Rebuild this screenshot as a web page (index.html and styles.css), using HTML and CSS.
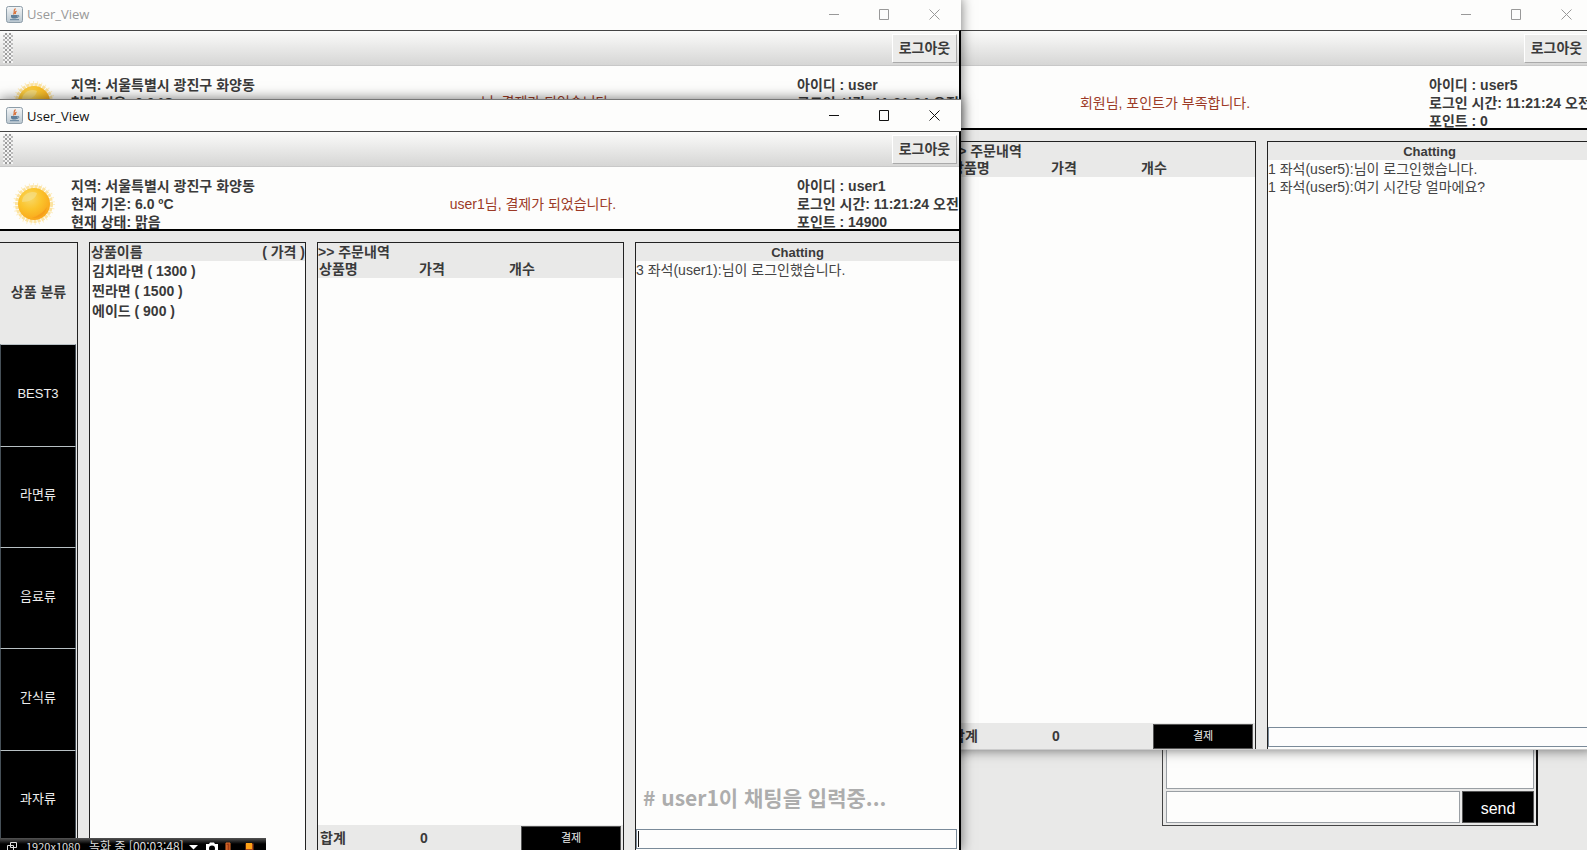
FILE: index.html
```html
<!DOCTYPE html>
<html lang="ko">
<head>
<meta charset="utf-8">
<title>User_View</title>
<link rel="stylesheet" href="styles.css">
</head>
<body>
<svg class="defs" aria-hidden="true">
  <defs>
    <radialGradient id="sunFill" cx="38%" cy="32%" r="70%">
      <stop offset="0" stop-color="#f8d868"/><stop offset=".5" stop-color="#fbc42c"/><stop offset="1" stop-color="#f9a61a"/>
    </radialGradient>
    <linearGradient id="javaFill" x1="0" y1="0" x2="0" y2="1">
      <stop offset="0" stop-color="#f4f6f7"/><stop offset="1" stop-color="#b9c6cf"/>
    </linearGradient>
    <symbol id="java" viewBox="0 0 17 17">
      <rect x=".5" y=".5" width="16" height="16" rx="2" fill="url(#javaFill)" stroke="#8d9da8"/>
      <path d="M9.500 2.500C6.500 5 9.500 5.500 7.500 8.500M10.500 5C9 6 9 7 9.500 8" fill="none" stroke="#d9713a" stroke-width="1.200"/>
      <path d="M5 9h6.500v1.500a2 2 0 0 1-2 2H7a2 2 0 0 1-2-2z" fill="#5f7f9a"/>
      <path d="M11.500 9.500c2-.5 2 1.500-.5 2M4 13.700h9" fill="none" stroke="#5f7f9a"/>
    </symbol>
    <symbol id="sun" viewBox="0 0 44 44">
      <circle cx="22" cy="22" r="19" fill="none" stroke="#fdeec4" stroke-width="4" stroke-dasharray="1 3"/>
      <circle cx="22" cy="22" r="17" fill="none" stroke="#fce3a0" stroke-width="4" stroke-dasharray="3 1"/>
      <circle cx="22" cy="22" r="16" fill="url(#sunFill)"/>
      <path d="M20 36c9 1 14-5 15-11-3 4-4 5-7 7s-5 3-8 4z" fill="#f59a1c" opacity=".8"/>
      <path d="M10 20c0-8 9-12 15-9-1 6-8 9-15 9z" fill="#f5de86" opacity=".7"/>
    </symbol>
    <symbol id="min" viewBox="0 0 11 11"><path d="M0 5.500h10" stroke="currentColor" fill="none"/></symbol>
    <symbol id="max" viewBox="0 0 11 11"><path d="M.5.5h9v10h-9z" stroke="currentColor" fill="none"/></symbol>
    <symbol id="close" viewBox="0 0 11 11"><path d="M.5.5l10 10M10.500.5l-10 10" stroke="currentColor" fill="none"/></symbol>
  </defs>
</svg>
<main class="desktop">

  <section class="window admin" aria-label="채팅">
    <div class="admin-chat">
      <textarea class="admin-log" aria-label="대화 내용"></textarea>
      <form class="admin-form">
        <input class="admin-input" type="text" aria-label="메시지">
        <button class="send" type="button">send</button>
      </form>
    </div>
  </section>

  <section class="window user-window third inactive">
    <div class="titlebar">
      <div class="controls">
        <button type="button" aria-label="최소화"><svg><use href="#min"/></svg></button>
        <button type="button" aria-label="최대화"><svg><use href="#max"/></svg></button>
        <button type="button" aria-label="닫기"><svg><use href="#close"/></svg></button>
      </div>
    </div>
    <div class="client">
      <div class="toolbar"><span class="grip"></span><button class="logout" type="button">로그아웃</button></div>
      <header class="info">
        <span></span>
        <div></div>
        <p class="message">회원님, 포인트가 부족합니다.</p>
        <div class="lines">아이디 : user5<br>로그인 시간: 11:21:24 오전<br>포인트 : 0</div>
      </header>
      <div class="work">
        <div class="panel"></div>
        <div class="panel"></div>
        <div class="panel order">
          <h2 class="caption">&gt;&gt; 주문내역</h2>
          <table class="items"><thead><tr><th>상품명</th><th>가격</th><th>개수</th></tr></thead></table>
          <div class="total"><span>합계</span><output>0</output><button class="pay" type="button">결제</button></div>
        </div>
        <div class="panel chat">
          <h2 class="chat-title">Chatting</h2>
          <div class="log"><p>1 좌석(user5):님이 로그인했습니다.</p><p>1 좌석(user5):여기 시간당 얼마에요?</p></div>
          <input class="chat-input" type="text" aria-label="채팅 입력">
        </div>
      </div>
    </div>
  </section>

  <section class="window user-window first inactive">
    <div class="titlebar">
      <svg class="app-icon"><use href="#java"/></svg><h1 class="title">User_View</h1>
      <div class="controls">
        <button type="button" aria-label="최소화"><svg><use href="#min"/></svg></button>
        <button type="button" aria-label="최대화"><svg><use href="#max"/></svg></button>
        <button type="button" aria-label="닫기"><svg><use href="#close"/></svg></button>
      </div>
    </div>
    <div class="client">
      <div class="toolbar"><span class="grip"></span><button class="logout" type="button">로그아웃</button></div>
      <header class="info">
        <svg class="sun"><use href="#sun"/></svg>
        <div class="lines">지역: 서울특별시 광진구 화양동<br>현재 기온: 6.0 ºC</div>
        <p class="message">user님, 결제가 되었습니다.</p>
        <div class="lines">아이디 : user<br>로그인 시간: 11:21:24 오전</div>
      </header>
    </div>
  </section>

  <section class="window user-window second">
    <div class="titlebar">
      <svg class="app-icon"><use href="#java"/></svg><h1 class="title">User_View</h1>
      <div class="controls">
        <button type="button" aria-label="최소화"><svg><use href="#min"/></svg></button>
        <button type="button" aria-label="최대화"><svg><use href="#max"/></svg></button>
        <button type="button" aria-label="닫기"><svg><use href="#close"/></svg></button>
      </div>
    </div>
    <div class="client">
      <div class="toolbar"><span class="grip"></span><button class="logout" type="button">로그아웃</button></div>
      <header class="info">
        <svg class="sun"><use href="#sun"/></svg>
        <div class="lines">지역: 서울특별시 광진구 화양동<br>현재 기온: 6.0 ºC<br>현재 상태: 맑음</div>
        <p class="message">user1님, 결제가 되었습니다.</p>
        <div class="lines">아이디 : user1<br>로그인 시간: 11:21:24 오전<br>포인트 : 14900</div>
      </header>
      <div class="work">
        <nav class="panel categories">
          <h2 class="category-title">상품 분류</h2>
          <button type="button">BEST3</button>
          <button type="button">라면류</button>
          <button type="button">음료류</button>
          <button type="button">간식류</button>
          <button type="button">과자류</button>
        </nav>
        <div class="panel products">
          <div class="caption split"><span>상품이름</span><span>( 가격 )</span></div>
          <ul class="product-list"><li>김치라면 ( 1300 )</li><li>찐라면 ( 1500 )</li><li>에이드 ( 900 )</li></ul>
        </div>
        <div class="panel order">
          <h2 class="caption">&gt;&gt; 주문내역</h2>
          <table class="items"><thead><tr><th>상품명</th><th>가격</th><th>개수</th></tr></thead></table>
          <div class="total"><span>합계</span><output>0</output><button class="pay" type="button">결제</button></div>
        </div>
        <div class="panel chat">
          <h2 class="chat-title">Chatting</h2>
          <div class="log"><p>3 좌석(user1):님이 로그인했습니다.</p></div>
          <p class="typing"># user1이 채팅을 입력중...</p>
          <div class="chat-entry"><input class="chat-input" type="text" aria-label="채팅 입력"><span class="caret"></span></div>
        </div>
      </div>
    </div>
  </section>

  <aside class="recorder">
    <svg class="rec-size" viewBox="0 0 10 10"><path d="M3.500.5h6v5h-6zM.5 3.500h6v5h-6z" fill="none" stroke="#ddd"/></svg>
    <span class="rec-res">1920x1080</span>
    <span class="rec-time">녹화 중 [00:03:48]</span>
    <svg class="rec-icons" viewBox="0 0 70 10">
      <path d="M0 3h9L4.500 7.500z" fill="#fff"/>
      <path d="M17 2h3l1-1.500h4L26 2h3v9H17z" fill="#fff"/><circle cx="23" cy="6.500" r="3" fill="#000"/>
      <path d="M37 1h4v9h-4zM38 3v5" fill="#a33c14" stroke="#e0702c"/>
      <path d="M56.500 1.500h8v8h-8z" fill="#a8481c"/><path d="M57 1h6v6h-6z" fill="#ffa216"/>
    </svg>
  </aside>
</main>
</body>
</html>
```
FILE: styles.css
```css
* { box-sizing: border-box; }

body {
  margin: 0;
  background: #e9e9e8;
  color: #3a3a3a;
  font: 14px/17px "Liberation Sans", "Noto Sans CJK KR", sans-serif;
}

h1, h2, p, ul { margin: 0; padding: 0; font: inherit; }

button, input, textarea { font: inherit; border-radius: 0; outline: 0; }

.defs { position: absolute; width: 0; height: 0; }

.desktop {
  position: relative;
  height: 100vh;
  overflow: hidden;
}

/* Windows sit freely on the desktop */
.window { position: absolute; }

.user-window {
  display: flex;
  flex-direction: column;
  width: 961px;
  height: 752px;
  background: #e9e9e8;
  box-shadow: 0 0 12px rgba(0, 0, 0, .55);
}

.first { left: 0; top: -2px; }
.second { left: 0; top: 99px; border-top: 1px solid #777; }
.third { left: 632px; top: -2px; border-bottom: 1px solid #ccc; }

.titlebar {
  display: flex;
  align-items: center;
  flex: none;
  height: 32px;
  padding: 0 2px 0 6px;
  background: #fdfdfc;
  color: #111;
}

.second .titlebar { height: 31px; }

.inactive .titlebar { color: #999; }

.app-icon { width: 17px; height: 17px; margin-right: 4px; }

.title { font: 13px/18px "Open Sans", sans-serif; }

.controls { display: flex; margin-left: auto; }

.controls button {
  display: grid;
  place-items: center;
  width: 50px;
  height: 30px;
  padding: 0;
  border: 0;
  background: none;
  color: inherit;
}

.controls svg { width: 11px; height: 11px; }

.client {
  display: flex;
  flex-direction: column;
  flex: 1;
  min-height: 0;
  border-top: 1px solid #444;
  border-right: 2px solid #000;
}

.toolbar {
  display: flex;
  align-items: center;
  justify-content: space-between;
  flex: none;
  height: 35px;
  padding: 1px 2px 1px 3px;
  border-bottom: 1px solid #c8c8c8;
  background: linear-gradient(#fbfbfa, #d6d6d5);
}

.grip {
  width: 10px;
  height: 30px;
  background:
    conic-gradient(#999 25%, transparent 0) 0 0 / 4px 4px,
    conic-gradient(#bbb 25%, transparent 0) 2px 2px / 4px 4px,
    #f4f4f4;
}

.logout {
  width: 65px;
  height: 29px;
  padding: 0;
  border: 1px solid #fff;
  border-right-color: #aaa;
  border-bottom-color: #aaa;
  background: #ebebea;
  color: #3a3a3a;
  font-weight: bold;
}

.info {
  display: grid;
  grid-template-columns: 71px 198px 1fr 162px;
  align-items: center;
  flex: none;
  height: 64px;
  padding-top: 10px;
  border-bottom: 2px solid #000;
  background: #fdfdfc;
  overflow: hidden;
}

.sun { width: 44px; height: 44px; margin-left: 12px; }

.lines { align-self: start; font-weight: bold; line-height: 18px; white-space: nowrap; }

.message { color: #9c3a26; text-align: center; }

.work {
  display: grid;
  grid-template-columns: 78px 217px 307px 1fr;
  gap: 11px;
  flex: 1;
  min-height: 0;
  padding-top: 11px;
}

.panel {
  display: flex;
  flex-direction: column;
  min-height: 0;
  border: 1px solid #222;
  border-bottom: 0;
  background: #fdfdfc;
}

.caption { flex: none; height: 18px; background: #e9e9e8; font-weight: bold; line-height: 18px; }

.split { display: flex; justify-content: space-between; padding-left: 1px; }

.product-list {
  list-style: none;
  padding-left: 2px;
  font-weight: bold;
  line-height: 20px;
}

.categories {
  display: grid;
  grid-auto-rows: 1fr;
  border-left: 0;
  background: #e9e9e8;
}

.category-title { display: grid; place-items: center; padding-bottom: 2px; font-weight: bold; }

.categories button {
  margin-right: 1px;
  padding: 0 0 4px;
  border: 1px solid #465058;
  border-top-color: #b8c0c4;
  border-bottom: 0;
  background: #000;
  color: #eee;
  font-size: 13px;
}

.items { border-collapse: collapse; width: 100%; background: #e9e9e8; table-layout: fixed; }

.items th { padding: 0 0 0 1px; text-align: left; line-height: 17px; }

.items th:first-child { width: 100px; }
.items th:nth-child(2) { width: 90px; }

.total {
  display: grid;
  grid-template-columns: 100px 1fr 100px;
  align-items: center;
  height: 26px;
  margin-top: auto;
  padding: 0 2px;
  background: #e9e9e8;
  font-weight: bold;
}

.pay {
  height: 25px;
  padding: 0;
  border: 1px solid #555;
  background: #000;
  color: #eee;
  font-size: 11px;
  font-weight: normal;
}

.chat { border-right: 0; }

.chat-title {
  flex: none;
  height: 18px;
  background: #e9e9e8;
  font-size: 13px;
  font-weight: bold;
  line-height: 20px;
  text-align: center;
}

.log { flex: 1; color: #444; line-height: 18px; }

.typing {
  padding: 0 7px 18px;
  color: #adadad;
  font: bold 21px/28px "Noto Sans CJK KR", sans-serif;
}

.chat-entry { position: relative; display: grid; }

.chat-input {
  width: calc(100% - 2px);
  height: 20px;
  margin-bottom: 2px;
  padding: 0 4px;
  border: 1px solid #7a8a99;
  background: #fdfdfd;
}

.caret { position: absolute; left: 2px; top: 2px; width: 1px; height: 16px; background: #111; }

.admin { left: 1162px; top: 700px; }

.admin-chat {
  display: flex;
  flex-direction: column;
  gap: 2px;
  width: 376px;
  height: 126px;
  padding: 0 2px 2px 3px;
  border: 1px solid #444;
  border-right: 2px solid #111;
}

.admin-log {
  flex: 1;
  border: 1px solid #9a9fa4;
  background: #fdfdfc;
  resize: none;
}

.admin-form { display: flex; gap: 2px; height: 32px; margin: 0; }

.admin-input { flex: 1; min-width: 0; border: 1px solid #9a9fa4; background: #fdfdfc; }

.send {
  width: 72px;
  padding: 3px 0 0;
  border: 1px solid #555;
  background: #000;
  color: #fff;
  font-size: 16px;
}

/* Screen recorder strip lies over the windows */
.recorder {
  position: absolute;
  left: 0;
  bottom: 0;
  display: flex;
  align-items: flex-start;
  width: 266px;
  height: 12px;
  padding: 1px 0 0 7px;
  overflow: hidden;
  background: linear-gradient(#555, #000 6px);
  color: #ddd;
  font: 11px/14px "Liberation Sans Narrow", "Noto Sans CJK KR", sans-serif;
  white-space: nowrap;
}

.rec-size { flex: none; width: 10px; height: 10px; margin: 3px 9px 0 0; }
.rec-res { flex: none; width: 63px; }
.rec-time { flex: none; width: 100px; font-size: 12px; }
.rec-icons { flex: none; width: 70px; height: 10px; margin-top: 3px; }
```
